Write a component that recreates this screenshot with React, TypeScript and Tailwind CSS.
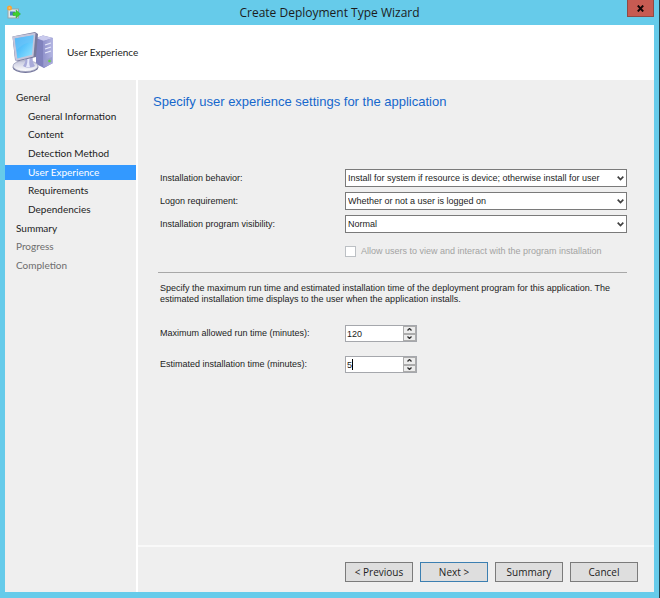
import { useState } from 'react';

interface Step {
  label: string;
  level: number;
  pending?: boolean;
}

const steps: Step[] = [
  { label: 'General', level: 0 },
  { label: 'General Information', level: 1 },
  { label: 'Content', level: 1 },
  { label: 'Detection Method', level: 1 },
  { label: 'User Experience', level: 1 },
  { label: 'Requirements', level: 1 },
  { label: 'Dependencies', level: 1 },
  { label: 'Summary', level: 0 },
  { label: 'Progress', level: 0, pending: true },
  { label: 'Completion', level: 0, pending: true },
];

function WizardIcon() {
  return (
    <svg className="h-[15px] w-[14px]" viewBox="0 0 14 15" aria-hidden="true">
      <rect x="1" y="4" width="10.500" height="9" fill="#dfe8ea" stroke="#98a5a8" />
      <rect x="3" y="6.500" width="5" height="4" fill="#4c7fc0" />
      <path d="M6 7.500h3V5L13.500 9l-4.500 4v-2.500H6z" fill="#3fd02c" stroke="#35a82a" strokeWidth=".5" />
      <circle cx="2.500" cy="3" r="2.500" fill="#f5a53a" />
      <circle cx="2.500" cy="3" r="1" fill="#ffc060" />
    </svg>
  );
}

function ComputerIcon() {
  return (
    <svg className="h-[42px] w-[42px]" viewBox="0 0 42 42" aria-hidden="true">
      <defs>
        <linearGradient id="screen" x1="0" y1="0" x2="1" y2="1">
          <stop offset="0" stopColor="#35a5f2" />
          <stop offset=".5" stopColor="#5cc5fb" />
          <stop offset="1" stopColor="#9ae6ff" />
        </linearGradient>
        <linearGradient id="tower" x1="0" y1="0" x2="1" y2="0">
          <stop offset="0" stopColor="#9092cc" />
          <stop offset="1" stopColor="#b4b6e2" />
        </linearGradient>
        <linearGradient id="base" x1="0" y1="0" x2="0" y2="1">
          <stop offset="0" stopColor="#c3c5dc" />
          <stop offset="1" stopColor="#ffffff" />
        </linearGradient>
      </defs>
      <path d="M24 6l7-2.500L41 6v25l-9 5-8-4z" fill="#8082bd" />
      <path d="M24 6l7-2.500L41 6l-9 3z" fill="#c9caed" />
      <path d="M31 9l10-3v25l-10 5z" fill="url(#tower)" />
      <path d="M33 13l6-2M33 17l6-2M33 21l6-2" stroke="#e6e8fb" strokeWidth="1.300" />
      <path d="M32 28l8-3v5l-8 4z" fill="#9c9ecd" />
      <circle cx="37.500" cy="29" r="1.300" fill="#62d63e" />
      <ellipse cx="13.500" cy="35.300" rx="12.800" ry="5.600" fill="#73759b" />
      <ellipse cx="13.500" cy="34" rx="12.500" ry="5.500" fill="url(#base)" stroke="#9a9cba" strokeWidth=".7" />
      <path d="M13 26l8-2c-1 4 0 7 2 10-3 2-9 2-12 0 2-3 3-5 2-8z" fill="#a9abd9" />
      <path d="M15 26l3-1c-1 4-1 7 0 10h-4c1-3 2-6 1-9z" fill="#e6e8fa" />
      <path d="M.500 4.500L23 0l3 2-2 23L5 29.500 3 28z" fill="#777a9c" />
      <path d="M.500 4.500L23.500.8l-2 23.700L3.500 29z" fill="#c4c6dc" />
      <path d="M2.800 6.500L21.500 3.200l-1.500 19.500L5.300 26.500z" fill="url(#screen)" />
      <path d="M2.800 6.500l18.700-3.300-.5 7C14 10 8 14 4.300 19z" fill="#70c4f8" opacity=".6" />
    </svg>
  );
}

interface SelectRowProps {
  id: string;
  label: string;
  options: string[];
}

function SelectRow({ id, label, options }: SelectRowProps) {
  return (
    <div className="flex items-center">
      <label htmlFor={id} className="w-[185px] shrink-0">{label}</label>
      <div className="relative min-w-0 flex-1">
        <select
          id={id}
          className="block h-[18px] w-full appearance-none border border-[#7a7a7a] bg-white pl-[2px] pr-4 leading-[16px] outline-none"
        >
          {options.map((option) => (
            <option key={option}>{option}</option>
          ))}
        </select>
        <svg className="pointer-events-none absolute right-[3px] top-[7px] h-[5px] w-[7px]" viewBox="0 0 7 5" aria-hidden="true">
          <path d="M.7.7l2.800 2.800L6.300.7" fill="none" stroke="#404040" strokeWidth="1.700" />
        </svg>
      </div>
    </div>
  );
}

interface SpinRowProps {
  id: string;
  label: string;
  initial: number;
  active?: boolean;
}

function SpinRow({ id, label, initial, active }: SpinRowProps) {
  const [value, setValue] = useState(initial);

  return (
    <div className="flex items-center">
      <label htmlFor={id} className="w-[185px] shrink-0">{label}</label>
      <div className="relative flex h-[17px] w-[72px] border border-[#a5a7ac] bg-white">
        <input
          id={id}
          type="text"
          inputMode="numeric"
          value={value}
          onChange={(e) => setValue(Number(e.target.value) || 0)}
          className="min-w-0 flex-1 bg-transparent pl-[1px] leading-[14px] outline-none"
        />
        {active && <span className="absolute left-[6px] top-[2px] h-[11px] w-px bg-black" />}
        <div className="flex w-[13px] flex-col">
          <button type="button" aria-label="Increase" onClick={() => setValue(value + 1)} className="flex flex-1 items-center justify-center border border-[#acacac] bg-[#ececec]">
            <svg className="h-[3px] w-[5px]" viewBox="0 0 5 3" aria-hidden="true">
              <path d="M.5 2.500l2-2 2 2" fill="none" stroke="#303030" strokeWidth="1.300" />
            </svg>
          </button>
          <button type="button" aria-label="Decrease" onClick={() => setValue(value - 1)} className="flex flex-1 items-center justify-center border border-[#acacac] bg-[#ececec]">
            <svg className="h-[3px] w-[5px]" viewBox="0 0 5 3" aria-hidden="true">
              <path d="M.5.5l2 2 2-2" fill="none" stroke="#303030" strokeWidth="1.300" />
            </svg>
          </button>
        </div>
      </div>
    </div>
  );
}

const buttonClass = "h-[20px] w-[68px] border bg-[#dedede] text-center leading-[18px]";

export default function App() {
  return (
    <div className="flex min-h-screen flex-col border-r border-[#23444f] bg-[#66cbea] pb-[6px] pl-[5px] pr-[5px] font-['Open_Sans','Noto_Sans',sans-serif] text-[10px] text-[#1c1c1c]">
      <header className="relative flex h-[25px] shrink-0 items-center justify-center">
        <div className="absolute left-[2px] top-[5px]">
          <WizardIcon />
        </div>
        <h1 className="text-[12px] leading-[16px]">Create Deployment Type Wizard</h1>
        <button type="button" aria-label="Close" className="absolute right-0 top-0 flex h-[17px] w-[27px] items-center justify-center border border-t-0 border-[#8e4a45] bg-[#c75b52]">
          <svg className="h-[7px] w-[7px]" viewBox="0 0 7 7" aria-hidden="true">
            <path d="M.8.5l5.400 6M6.200.5l-5.400 6" stroke="#140606" strokeWidth="1.900" />
          </svg>
        </button>
      </header>

      <div className="flex h-[55px] shrink-0 items-center bg-white pl-[7px]">
        <ComputerIcon />
        <h2 className="pl-[13px] font-['Lato','Open_Sans',sans-serif]">User Experience</h2>
      </div>

      <div className="flex flex-1 bg-[#efefef]">
        <nav className="w-[133px] shrink-0 border-r-2 border-white pt-[10px] font-['Lato','Open_Sans',sans-serif]">
          <ul className="flex h-[183px] flex-col justify-between leading-[15px]">
            {steps.map((step) => (
              <li key={step.label}>
                <a
                  href="#"
                  className={`block h-[15px] ${step.level ? 'pl-[23px]' : 'pl-[11px]'} ${
                    step.label === 'User Experience' ? 'bg-[#3399ff] text-white' : ''
                  } ${step.pending ? 'text-[#6d6d6d]' : ''}`}
                >
                  {step.label}
                </a>
              </li>
            ))}
          </ul>
        </nav>

        <div className="flex min-w-0 flex-1 flex-col">
          <main className="flex-1 pl-[22px] pr-[27px] pt-[13px] font-['Liberation_Sans',Arial,sans-serif] text-[9px] leading-[11px]">
            <h3 className="-ml-[7px] text-[13px] leading-[18px] text-[#1667cc]">
              Specify user experience settings for the application
            </h3>

            <div className="mt-[58px] flex flex-col gap-[5px]">
              <SelectRow
                id="behavior"
                label="Installation behavior:"
                options={['Install for system if resource is device; otherwise install for user', 'Install for user', 'Install for system']}
              />
              <SelectRow
                id="logon"
                label="Logon requirement:"
                options={['Whether or not a user is logged on', 'Only when a user is logged on']}
              />
              <SelectRow id="visibility" label="Installation program visibility:" options={['Normal', 'Hidden', 'Minimized', 'Maximized']} />
            </div>

            <label className="ml-[185px] mt-[13px] flex items-center gap-[5px] text-[#a3a3a3]">
              <input type="checkbox" disabled className="h-[11px] w-[11px] shrink-0 appearance-none border border-[#bcc0c4] bg-white" />
              Allow users to view and interact with the program installation
            </label>

            <hr className="-ml-[2px] mt-[15px] border-t border-[#a8a8a8]" />

            <p className="mt-[10px]">
              Specify the maximum run time and estimated installation time of the deployment program for this application. The
              estimated installation time displays to the user when the application installs.
            </p>

            <div className="mt-[20px] flex flex-col gap-[14px]">
              <SpinRow id="max-time" label="Maximum allowed run time (minutes):" initial={120} />
              <SpinRow id="est-time" label="Estimated installation time (minutes):" initial={5} active />
            </div>
          </main>

          <footer className="flex h-[47px] shrink-0 justify-end gap-[7px] border-t-2 border-[#f9f9f9] pr-[16px] pt-[15px]">
            <button type="button" className={`${buttonClass} border-[#7b7b7b]`}>&lt; Previous</button>
            <button type="button" className={`${buttonClass} border-[#3c7fb1]`}>Next &gt;</button>
            <button type="button" className={`${buttonClass} border-[#7b7b7b]`}>Summary</button>
            <button type="button" className={`${buttonClass} border-[#7b7b7b]`}>Cancel</button>
          </footer>
        </div>
      </div>
    </div>
  );
}
